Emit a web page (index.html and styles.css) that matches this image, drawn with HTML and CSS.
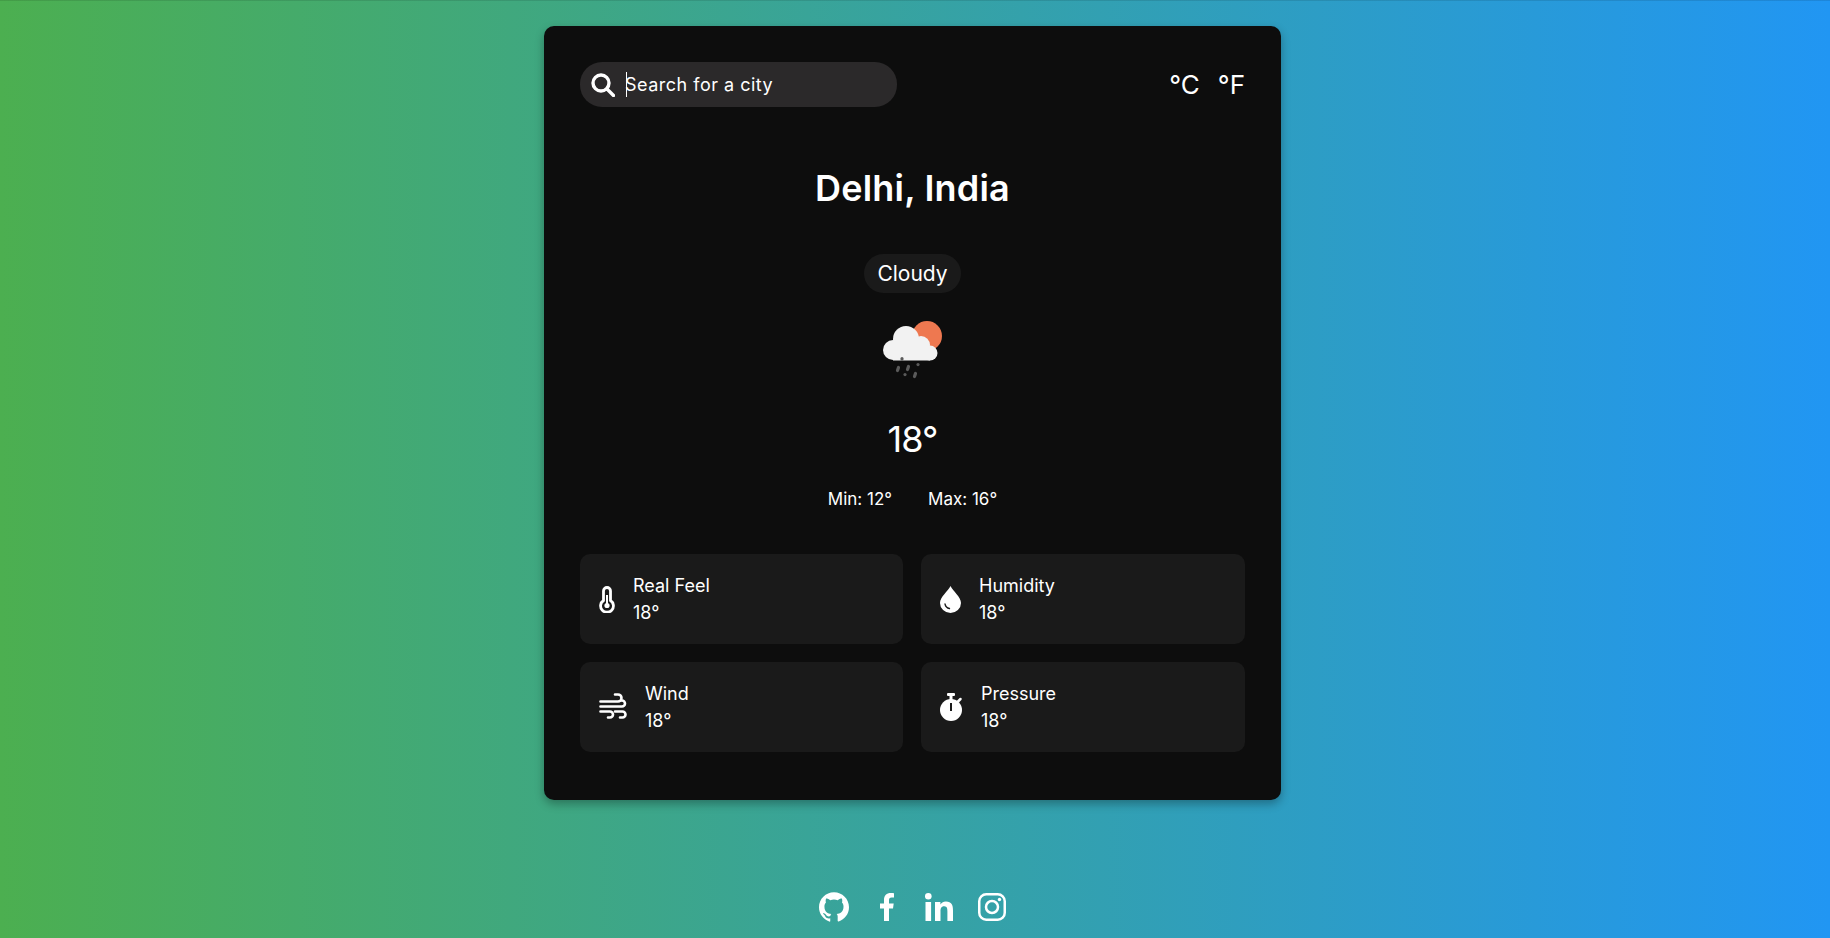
FILE: index.html
```html
<!DOCTYPE html>
<html lang="en">
    <head>
        <meta charset="UTF-8">
        <meta name="viewport" content="width=device-width, initial-scale=1.0">
        <title>Weather App</title>
        <link rel="stylesheet" href="styles.css">
    </head>

    <body>
        <main class="weather-card">
            <div class="top-bar">
                <form class="search-box">
                    <svg class="search-icon" viewBox="0 0 24 24" fill="none" stroke="#fff" stroke-width="3.400" stroke-linecap="round">
                        <circle cx="10" cy="10" r="8"/>
                        <path d="M16 16l6.500 6.500"/>
                    </svg>
                    <span class="caret"></span>
                    <input type="text" placeholder="Search for a city">
                </form>
                <div class="units">
                    <span>°C</span>
                    <span>°F</span>
                </div>
            </div>

            <h1 class="city">Delhi, India</h1>

            <div class="forecast">
                <p class="condition">Cloudy</p>
                <svg class="forecast-icon" viewBox="0 0 59 58">
                    <circle cx="44" cy="15" r="15" fill="#ee7850"/>
                    <g fill="#f2f2f2">
                        <circle cx="23" cy="18" r="13"/>
                        <circle cx="10" cy="29" r="10"/>
                        <circle cx="38" cy="24" r="9"/>
                        <circle cx="47" cy="32" r="7.500"/>
                        <rect x="10" y="25" width="37" height="14.500"/>
                    </g>
                    <g fill="none" stroke="#5a5a5a" stroke-width="3.200" stroke-linecap="round">
                        <path d="M19 37.500v.6"/>
                        <path d="M15.500 46.500l-1 3"/>
                        <path d="M25.500 45.500l-1 3"/>
                        <path d="M35 43.500v.1"/>
                        <path d="M22 53.500v.1"/>
                        <path d="M32.500 52.500l-1 3"/>
                    </g>
                </svg>
                <p class="temp">18°</p>
                <div class="min-max">
                    <span>Min: 12°</span>
                    <span>Max: 16°</span>
                </div>
            </div>

            <div class="details">
                <div class="detail">
                    <svg class="icon-thermo" viewBox="0 0 16 27" fill="none" stroke="#fff">
                        <path d="M4.500 5a3.500 3.500 0 0 1 7 0v9.500a6.400 6.400 0 1 1-7 0z" stroke-width="2.800"/>
                        <path d="M8 9v10" stroke-width="2"/>
                        <circle cx="8" cy="19.500" r="2.600" fill="#fff" stroke="none"/>
                    </svg>
                    <div class="detail-text">
                        <span>Real Feel</span>
                        <span>18°</span>
                    </div>
                </div>
                <div class="detail">
                    <svg class="icon-drop" viewBox="0 0 21 27">
                        <path d="M10.500 0C13 5 21 11 21 17a10.500 10 0 0 1-21 0C0 11 8 5 10.500 0z" fill="#fff"/>
                        <path d="M5 18c.5 2.500 2 4 4.500 4.500" fill="none" stroke="#1a1a1a" stroke-width="1.300" stroke-linecap="round"/>
                    </svg>
                    <div class="detail-text">
                        <span>Humidity</span>
                        <span>18°</span>
                    </div>
                </div>
                <div class="detail">
                    <svg class="icon-wind" viewBox="0 0 28 28" fill="none" stroke="#fff" stroke-width="2.600" stroke-linecap="round">
                        <path d="M1.500 8.500H19a3.500 3.500 0 0 0 0-7h-3"/>
                        <path d="M1.500 13.500H23a3 3 0 0 0 0-6h-1"/>
                        <path d="M1.500 18.500H11a3 3 0 0 1 0 6H9"/>
                        <path d="M16 18.500h7.500a3 3 0 0 1 0 6H21"/>
                    </svg>
                    <div class="detail-text">
                        <span>Wind</span>
                        <span>18°</span>
                    </div>
                </div>
                <div class="detail">
                    <svg class="icon-watch" viewBox="0 0 23 28">
                        <circle cx="11" cy="17" r="11" fill="#fff"/>
                        <rect x="7" y="0" width="8" height="3" rx="1" fill="#fff"/>
                        <rect x="9.500" y="2" width="3" height="5" fill="#fff"/>
                        <path d="M18 8.500l2.500-2.500" stroke="#fff" stroke-width="2.500" stroke-linecap="round"/>
                        <rect x="10" y="10" width="2" height="8" fill="#1a1a1a"/>
                    </svg>
                    <div class="detail-text">
                        <span>Pressure</span>
                        <span>18°</span>
                    </div>
                </div>
            </div>
        </main>

        <footer class="socials">
            <svg class="social-github" viewBox="0 0 24 24" fill="#fff">
                <path d="M12 .297c-6.630 0-12 5.373-12 12 0 5.303 3.438 9.800 8.205 11.385.6.113.82-.258.82-.577 0-.285-.01-1.040-.015-2.040-3.338.724-4.042-1.610-4.042-1.610C4.422 18.070 3.633 17.700 3.633 17.700c-1.087-.744.084-.729.084-.729 1.205.084 1.838 1.236 1.838 1.236 1.070 1.835 2.809 1.305 3.495.998.108-.776.417-1.305.76-1.605-2.665-.3-5.466-1.332-5.466-5.930 0-1.310.465-2.380 1.235-3.220-.135-.303-.54-1.523.105-3.176 0 0 1.005-.322 3.300 1.230.96-.267 1.980-.399 3-.405 1.020.006 2.040.138 3 .405 2.280-1.552 3.285-1.230 3.285-1.230.645 1.653.24 2.873.12 3.176.765.84 1.230 1.910 1.230 3.220 0 4.610-2.805 5.625-5.475 5.920.42.36.81 1.096.81 2.220 0 1.606-.015 2.896-.015 3.286 0 .315.21.69.825.57C20.565 22.092 24 17.592 24 12.297c0-6.627-5.373-12-12-12"/>
            </svg>
            <svg class="social-facebook" viewBox="0 0 14 28" fill="#fff">
                <path d="M4 28V15.500H0V10.500h4V7c0-4.500 2.700-7 6.700-7 1.300 0 2.500.1 3.300.2v4.400h-2.300C9.500 4.600 9 5.800 9 7.300v3.200h4.700l-.7 5H9V28z"/>
            </svg>
            <svg class="social-linkedin" viewBox="0 0 28 28" fill="#fff">
                <circle cx="3.300" cy="3.300" r="3.300"/>
                <rect x="0.500" y="9" width="5.600" height="19"/>
                <path d="M10 9h5.400v2.600c.8-1.500 2.700-3 5.500-3 5.800 0 7.100 3.800 7.100 8.800V28h-5.600V18.400c0-2.300 0-5.200-3.200-5.200s-3.700 2.500-3.700 5V28H10z"/>
            </svg>
            <svg class="social-instagram" viewBox="0 0 28 28" fill="none" stroke="#fff" stroke-width="2.500">
                <rect x="1.250" y="1.250" width="25.500" height="25.500" rx="7"/>
                <circle cx="14" cy="14" r="6"/>
                <circle cx="21.500" cy="6.500" r="1.700" fill="#fff" stroke="none"/>
            </svg>
        </footer>
    </body>
</html>
```

FILE: styles.css
```css
* {
    box-sizing: border-box;
}

body {
    font-family: Inter, "Liberation Sans", sans-serif;
    display: flex;
    flex-direction: column;
    align-items: center;
    height: 100vh;
    margin: 0;
    padding-right: 5px;
    overflow: hidden;
    color: #fff;
    border-top: 1px solid rgba(0, 0, 0, 0.1);
    background: linear-gradient(90deg, #4caf50, #2196f3);
}

p,
h1 {
    margin: 0;
}

.weather-card {
    width: 737px;
    height: 774px;
    margin-top: 25px;
    padding: 36px;
    background-color: #0d0d0d;
    border-radius: 10px;
    box-shadow: 0 4px 10px rgba(0, 0, 0, 0.3);
}

.top-bar {
    display: flex;
    justify-content: space-between;
    align-items: center;
}

.search-box {
    position: relative;
    display: flex;
    align-items: center;
    width: 317px;
    height: 45px;
    padding-left: 11px;
    background-color: #2b292a;
    border-radius: 22px;
}

.search-icon {
    width: 24px;
    height: 24px;
    flex-shrink: 0;
}

.search-box input {
    width: 260px;
    margin-left: 10px;
    padding: 0;
    border: none;
    outline: none;
    background: transparent;
    color: #fff;
    font-family: inherit;
    font-size: 18px;
    letter-spacing: 0.5px;
}

.search-box input::placeholder {
    color: #fff;
    opacity: 1;
}

.caret {
    position: absolute;
    left: 46px;
    top: 10px;
    width: 1px;
    height: 25px;
    background-color: #fff;
}

.units {
    display: flex;
    gap: 18px;
    font-size: 26px;
}

.city {
    margin-top: 54px;
    text-align: center;
    font-size: 36px;
    font-weight: 600;
    letter-spacing: 0.2px;
    line-height: 54px;
}

.forecast {
    display: flex;
    flex-direction: column;
    align-items: center;
}

.condition {
    margin-top: 39px;
    padding: 0 13px;
    height: 39px;
    line-height: 39px;
    font-size: 21px;
    background-color: #1a1a1a;
    border-radius: 20px;
}

.forecast-icon {
    width: 59px;
    height: 58px;
    margin-top: 28px;
}

.temp {
    margin-top: 33px;
    font-size: 36px;
    letter-spacing: -1px;
    line-height: 54px;
}

.min-max {
    display: flex;
    gap: 36px;
    margin-top: 20px;
    font-size: 17px;
    line-height: 26px;
}

.details {
    display: grid;
    grid-template-columns: 323px 324px;
    gap: 18px;
    margin-top: 42px;
}

.detail {
    display: flex;
    align-items: center;
    gap: 18px;
    height: 90px;
    padding-left: 19px;
    background-color: #1a1a1a;
    border-radius: 10px;
}

.detail-text {
    display: flex;
    flex-direction: column;
    font-size: 18px;
    line-height: 27px;
}

.icon-thermo {
    width: 16px;
    height: 27px;
}

.icon-drop {
    width: 21px;
    height: 27px;
}

.icon-wind {
    width: 28px;
    height: 28px;
}

.icon-watch {
    width: 23px;
    height: 28px;
}

.socials {
    display: flex;
    align-items: center;
    gap: 31px;
    margin-top: 92px;
}

.social-github {
    width: 30px;
    height: 30px;
}

.social-facebook {
    width: 14px;
    height: 28px;
}

.social-linkedin {
    width: 28px;
    height: 28px;
}

.social-instagram {
    width: 28px;
    height: 28px;
    margin-left: -6px;
}
```
